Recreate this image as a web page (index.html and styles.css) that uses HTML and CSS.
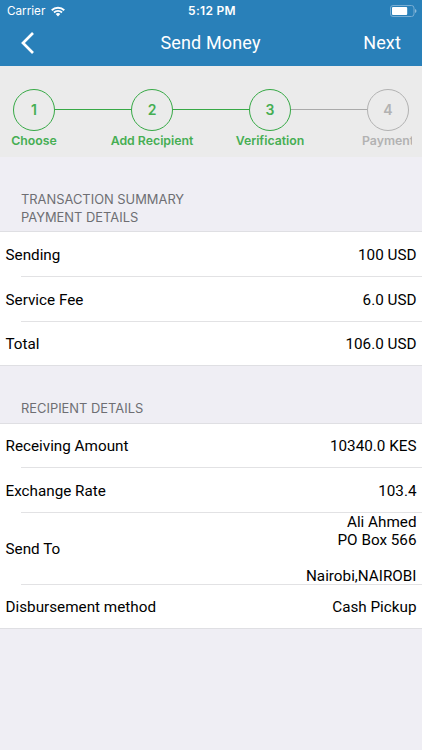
FILE: index.html
```html
<!DOCTYPE html>
<html lang="en">
<head>
<meta charset="utf-8">
<title>Send Money</title>
<link rel="stylesheet" href="styles.css">
</head>
<body>
<div class="screen">
  <header class="header">
    <div class="status">
      <div class="carrier"><span>Carrier</span>
        <svg class="wifi" width="14" height="11" viewBox="0 0 15 11" fill="none" stroke="#fff" stroke-width="2"><path d="M.8 4.2a9.6 9.6 0 0 1 13.4 0M3.2 6.6a6.1 6.1 0 0 1 8.6 0"/><path d="M5 8.3a3.6 3.6 0 0 1 5 0L7.5 10.8z" fill="#fff" stroke="none"/></svg>
      </div>
      <div class="time">5:12 PM</div>
      <svg class="battery" width="27" height="12" viewBox="0 0 27 12"><rect x=".5" y=".5" width="23.5" height="11" rx="2.5" fill="none" stroke="#78add3"/><rect x="2" y="2" width="15.2" height="8" rx="1" fill="#fff"/><path d="M25 4q1.5.4 1.5 2T25 8z" fill="#8bb9da"/></svg>
    </div>
    <nav class="nav">
      <svg class="back" width="15" height="24" viewBox="0 0 15 24" fill="none" stroke="#fff" stroke-width="2.7"><path d="M13 2 3 12l10 10"/></svg>
      <h1 class="title">Send Money</h1>
      <span class="next">Next</span>
    </nav>
  </header>
  <div class="steps">
    <div class="step"><div class="circle">1</div><div class="label">Choose</div></div>
    <div class="line"></div>
    <div class="step"><div class="circle">2</div><div class="label">Add Recipient</div></div>
    <div class="line"></div>
    <div class="step"><div class="circle">3</div><div class="label">Verification</div></div>
    <div class="line pending"></div>
    <div class="step pending"><div class="circle">4</div><div class="label payment">Payment</div></div>
  </div>
  <main>
    <h2 class="heading first">TRANSACTION SUMMARY<br>PAYMENT DETAILS</h2>
    <section class="group">
      <div class="row"><span>Sending</span><span>100 USD</span></div>
      <div class="row"><span>Service Fee</span><span>6.0 USD</span></div>
      <div class="row"><span>Total</span><span>106.0 USD</span></div>
    </section>
    <h2 class="heading second">RECIPIENT DETAILS</h2>
    <section class="group">
      <div class="row short"><span>Receiving Amount</span><span>10340.0 KES</span></div>
      <div class="row"><span>Exchange Rate</span><span>103.4</span></div>
      <div class="row tall"><span>Send To</span><span class="address">Ali Ahmed<br>PO Box 566<br><br>Nairobi,NAIROBI</span></div>
      <div class="row"><span>Disbursement method</span><span>Cash Pickup</span></div>
    </section>
  </main>
</div>
</body>
</html>
```
FILE: styles.css
```css
* { box-sizing: border-box; }
body { margin: 0; background: #efeef4; font-family: Roboto, sans-serif; }
.screen { width: 422px; height: 750px; overflow: hidden; }
.header { height: 66px; background: #2980b9; color: #fff; }
.status {
  display: grid; grid-template-columns: 1fr auto 1fr; align-items: center;
  height: 22px; padding: 0 5px 0 7px;
  font: 11.7px/22px Inter, sans-serif;
}
.carrier { display: flex; align-items: center; gap: 6px; }
.time { font-size: 12px; font-weight: 600; letter-spacing: .3px; }
.battery { justify-self: end; }
.nav {
  display: grid; grid-template-columns: 1fr auto 1fr; align-items: center;
  height: 41px; padding: 0 21px 0 20px;
}
.title { margin: 0; font-size: 18px; font-weight: 400; letter-spacing: .15px; }
.next { justify-self: end; font-size: 18px; letter-spacing: .15px; }
.steps {
  display: flex; align-items: flex-start; height: 91px; width: 422px;
  padding: 23px 13px 0; background: #ebebeb; color: #46ae53;
  font-family: Inter, sans-serif; font-weight: 600;
}
.step { width: 42px; flex: none; display: flex; flex-direction: column; align-items: center; }
.circle {
  width: 42px; height: 42px; border: 1px solid #37a946; border-radius: 50%;
  font-size: 14px; font-weight: 600; line-height: 40px; text-align: center;
}
.label { margin-top: 2px; font-size: 12.3px; line-height: 16px; white-space: nowrap; }
.line { width: 76px; height: 1px; margin-top: 20px; background: #37a946; flex: none; }
.line.pending { background: #aaa; }
.step.pending { color: #b2b2b2; }
.step.pending .circle { border-color: #b2b2b2; }
.payment { width: 50px; margin-right: 2px; overflow: hidden; }
.heading {
  margin: 0; padding-left: 21px; color: #6e6e73;
  font: 400 12.9px/18px Inter, sans-serif;
}
.first { height: 74px; padding-top: 34px; }
.second { height: 57px; padding-top: 34px; }
.group { background: #fff; border-top: 1px solid #dfdfe3; border-bottom: 1px solid #dfdfe3; }
.row {
  display: flex; justify-content: space-between; align-items: center;
  height: 45px; padding: 0 5.5px; font-size: 15.25px; line-height: 18px; color: #000;
  background: linear-gradient(#e2e2e4, #e2e2e4) 21px 100% / 401px 1px no-repeat;
}
.row:last-child { background: none; height: 43px; }
.row.short { height: 44px; }
.row.tall { height: 72px; }
.address { text-align: right; }
```
